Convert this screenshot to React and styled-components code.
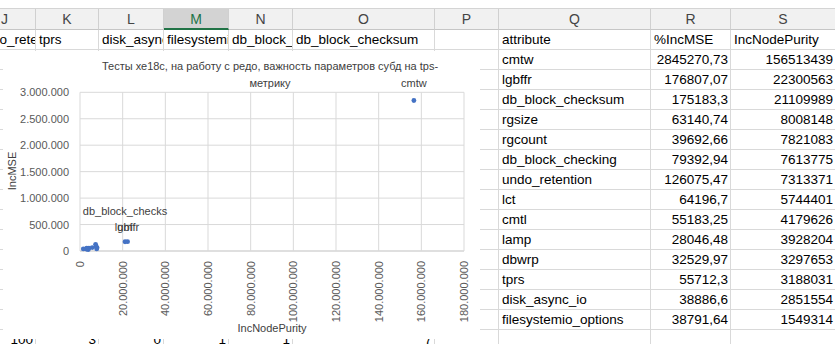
import React from 'react';
import styled, { createGlobalStyle } from 'styled-components';

const GlobalStyle = createGlobalStyle`
  html, body {
    margin: 0;
    padding: 0;
    background: #fff;
    overflow: hidden;
  }
  body {
    font-family: "Liberation Sans", Arial, sans-serif;
  }
`;

const Page = styled.div`
  position: relative;
  width: 835px;
  height: 344px;
  overflow: hidden;
  background: #fff;
`;

const TopStrip = styled.div`
  height: 9px;
  background: #fff;
  border-bottom: 1px solid #d4d4d4;
  box-sizing: border-box;
`;

const Sheet = styled.div`
  margin-left: -26px;
  display: flex;
  flex-direction: column;
`;

const Row = styled.div`
  display: flex;
  height: ${(p) => (p.$header ? 21 : 20)}px;
`;

const HeaderCell = styled.div`
  flex: 0 0 ${(p) => p.$w}px;
  box-sizing: border-box;
  height: 21px;
  border-right: 1px solid #d0d0d0;
  border-bottom: ${(p) => (p.$active ? '2px solid #217346' : '1px solid #c6c6c6')};
  background: ${(p) => (p.$active ? '#d3d3d3' : '#f1f1f1')};
  color: ${(p) => (p.$active ? '#217346' : '#444')};
  font-size: 14px;
  line-height: 20px;
  text-align: center;
`;

const Cell = styled.div`
  flex: 0 0 ${(p) => p.$w}px;
  box-sizing: border-box;
  height: 20px;
  border-right: 1px solid #d9d9d9;
  border-bottom: 1px solid #d9d9d9;
  padding: 0 ${(p) => (p.$num ? 2 : 3)}px;
  font-size: 13.5px;
  line-height: 19px;
  color: #000;
  white-space: nowrap;
  overflow: hidden;
  text-align: ${(p) => (p.$num ? 'right' : 'left')};
`;

const ChartBox = styled.div`
  position: absolute;
  left: 3px;
  top: 51px;
  width: 477px;
  height: 288px;
  background: #fff;
  display: flex;
  flex-direction: column;
`;

const ChartTitle = styled.div`
  width: 380px;
  margin-left: 77px;
  padding-top: 7px;
  font-size: 11px;
  line-height: 17px;
  color: #404040;
  text-align: center;
  white-space: nowrap;
`;

const Plot = styled.svg`
  display: block;
  overflow: visible;
  font-family: "Liberation Sans", Arial, sans-serif;
`;

const columns = [
  { key: 'J', w: 62 },
  { key: 'K', w: 63 },
  { key: 'L', w: 65 },
  { key: 'M', w: 65, active: true },
  { key: 'N', w: 64 },
  { key: 'O', w: 142 },
  { key: 'P', w: 64 },
  { key: 'Q', w: 152 },
  { key: 'R', w: 80 },
  { key: 'S', w: 105 },
];

const titles = [
  'undo_retention', 'tprs', 'disk_async_io', 'filesystemio_options',
  'db_block_checking', 'db_block_checksum', '', 'attribute', '%IncMSE', 'IncNodePurity',
];

const data = [
  ['cmtw', 2845270.73, 156513439],
  ['lgbffr', 176807.07, 22300563],
  ['db_block_checksum', 175183.3, 21109989],
  ['rgsize', 63140.74, 8008148],
  ['rgcount', 39692.66, 7821083],
  ['db_block_checking', 79392.94, 7613775],
  ['undo_retention', 126075.47, 7313371],
  ['lct', 64196.7, 5744401],
  ['cmtl', 55183.25, 4179626],
  ['lamp', 28046.48, 3928204],
  ['dbwrp', 32529.97, 3297653],
  ['tprs', 55712.3, 3188031],
  ['disk_async_io', 38886.6, 2851554],
  ['filesystemio_options', 38791.64, 1549314],
];

const lastRow = ['100', '3', '0', '1', '1', '7', '', '', '', ''];

const fmtComma = (v) => String(v).replace('.', ',');
const fmtDots = (v) => v.toLocaleString('de-DE');

// chart geometry (svg-local coords, svg sits at page x=3, y=92)
const OX = 3;
const OY = 92;
const px = (v) => 80 - OX + (v / 180e6) * 384;
const py = (v) => 251 - OY - (v / 3e6) * 158.7;

const yTicks = [0, 500000, 1000000, 1500000, 2000000, 2500000, 3000000];
const xTicks = [0, 20e6, 40e6, 60e6, 80e6, 100e6, 120e6, 140e6, 160e6, 180e6];

const Chart = () => (
  <ChartBox>
    <ChartTitle>
      Тесты хе18с, на работу с редо, важность параметров субд на tps-
      <br />
      метрику
    </ChartTitle>
    <Plot width="477" height="247" viewBox="0 0 477 247">
      {yTicks.map((t) => (
        <line key={'h' + t} x1={px(0)} x2={px(180e6)} y1={py(t)} y2={py(t)}
          stroke={t === 0 ? '#bfbfbf' : '#d9d9d9'} strokeWidth="1" />
      ))}
      {xTicks.map((t) => (
        <line key={'v' + t} x1={px(t)} x2={px(t)} y1={py(3e6)} y2={py(0)}
          stroke="#d9d9d9" strokeWidth="1" />
      ))}
      {yTicks.map((t) => (
        <text key={'yl' + t} x={66} y={py(t)} fontSize="11" fill="#595959"
          textAnchor="end" dominantBaseline="central">
          {fmtDots(t)}
        </text>
      ))}
      {xTicks.map((t) => (
        <text key={'xl' + t} x={px(t)} y={261 - OY} fontSize="11" fill="#595959"
          textAnchor="end" dominantBaseline="central"
          transform={`rotate(-90 ${px(t)} ${261 - OY})`}>
          {fmtDots(t)}
        </text>
      ))}
      <text x={12 - OX} y={171 - OY} fontSize="11" fill="#404040" textAnchor="middle"
        dominantBaseline="central" transform={`rotate(-90 ${12 - OX} ${171 - OY})`}>
        IncMSE
      </text>
      <text x={272 - OX} y={328 - OY} fontSize="11" fill="#404040" textAnchor="middle"
        dominantBaseline="central">
        IncNodePurity
      </text>
      {data.map(([name, mse, purity]) => (
        <circle key={name} cx={px(purity)} cy={py(mse)} r="2.4" fill="#4472c4" />
      ))}
      <text x={px(156513439)} y={83 - OY} fontSize="11" fill="#404040" textAnchor="middle"
        dominantBaseline="central">cmtw</text>
      <text x={125 - OX} y={211 - OY} fontSize="11" fill="#404040" textAnchor="middle"
        dominantBaseline="central">db_block_checks</text>
      <text x={125 - OX} y={227 - OY} fontSize="11" fill="#404040" textAnchor="middle"
        dominantBaseline="central">um</text>
      <text x={127 - OX} y={227 - OY} fontSize="11" fill="#404040" textAnchor="middle"
        dominantBaseline="central">lgbffr</text>
    </Plot>
  </ChartBox>
);

const App = () => {
  return (
    <Page>
      <GlobalStyle />
      <TopStrip />
      <Sheet>
        <Row $header>
          {columns.map((c) => (
            <HeaderCell key={c.key} $w={c.w} $active={c.active}>{c.key}</HeaderCell>
          ))}
        </Row>
        <Row>
          {columns.map((c, i) => (
            <Cell key={c.key} $w={c.w}>{titles[i]}</Cell>
          ))}
        </Row>
        {data.map(([name, mse, purity]) => (
          <Row key={name}>
            {columns.map((c) => {
              if (c.key === 'Q') return <Cell key={c.key} $w={c.w}>{name}</Cell>;
              if (c.key === 'R') return <Cell key={c.key} $w={c.w} $num>{fmtComma(mse)}</Cell>;
              if (c.key === 'S') return <Cell key={c.key} $w={c.w} $num>{purity}</Cell>;
              return <Cell key={c.key} $w={c.w} />;
            })}
          </Row>
        ))}
        <Row>
          {columns.map((c, i) => (
            <Cell key={c.key} $w={c.w} $num>{lastRow[i]}</Cell>
          ))}
        </Row>
      </Sheet>
      <Chart />
    </Page>
  );
};

export default App;
